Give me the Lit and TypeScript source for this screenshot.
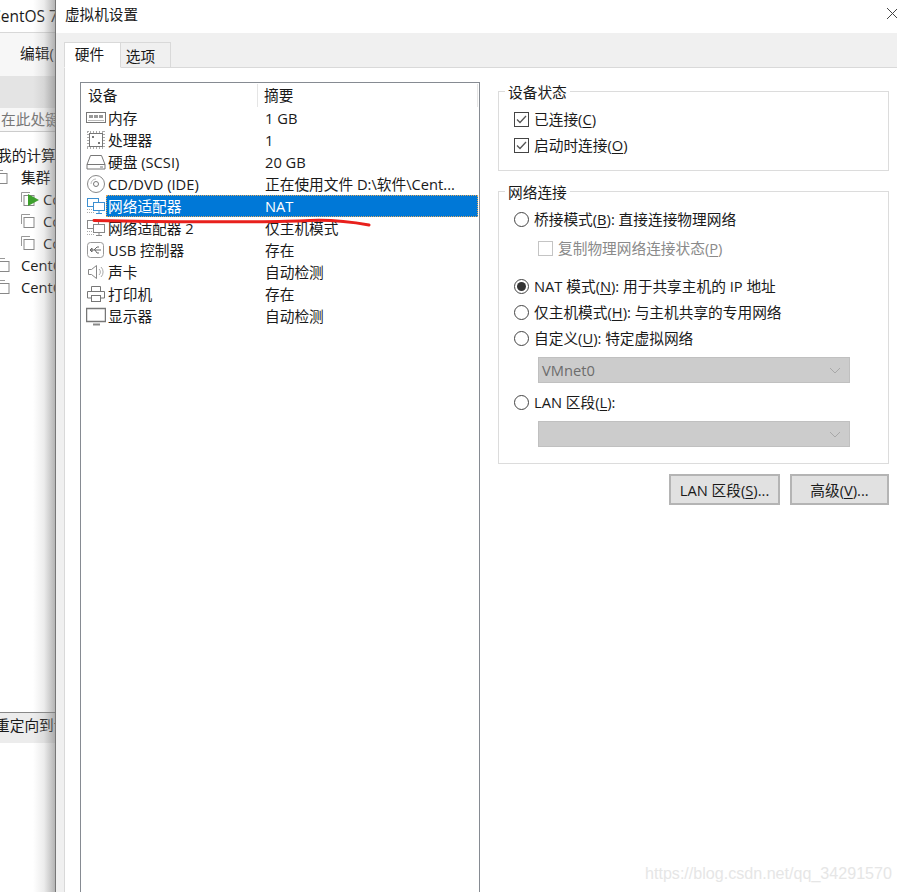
import { LitElement, html, css, svg } from "lit";
import { customElement } from "lit/decorators.js";

const G = "#7f7f7f";
const sv = (c: unknown, w = 20, h = 20) =>
  html`<svg class="ic" width=${w} height=${h} viewBox="0 0 ${w} ${h}" fill="none" stroke=${G}>${c}</svg>`;

const netIcon = (c: string) => sv(svg`
  <rect x="1.5" y="2.5" width="11" height="8" stroke=${c}/>
  <rect x="7.5" y="6.5" width="11" height="8" fill="#fff" stroke=${c}/>
  <path d="M13 14.5v3M10 17.5h6" stroke=${c}/>
  <path d="M1 13.5h6M1 16.5h7" stroke="#aaa" stroke-dasharray="1 1"/>
`);

const icons: Record<string, unknown> = {
  mem: sv(svg`<rect x="0.5" y="4.5" width="19" height="10" stroke="#777"/><rect x="3" y="7" width="4" height="3" fill="#999" stroke="none"/><rect x="8" y="7" width="4" height="3" fill="#999" stroke="none"/><rect x="13" y="7" width="4" height="3" fill="#999" stroke="none"/><path d="M2 12.5h16" stroke="#bbb"/>`),
  cpu: sv(svg`<rect x="3.5" y="3.5" width="13" height="13" stroke="#777"/><path d="M2 1v18M18 1v18M1 2h18M1 18h18" stroke="#aaa" stroke-width="2" stroke-dasharray="1 2" /><rect x="6" y="6" width="2" height="2" fill="#777" stroke="none"/><rect x="12" y="12" width="2" height="2" fill="#777" stroke="none"/>`),
  disk: sv(svg`<path d="M4.5 3.5h11l3.5 9v4.5h-18v-4.5z M1 12.5h18" stroke="#777"/><path d="M14 15h3" stroke="#777"/>`),
  cd: sv(svg`<circle cx="10" cy="10" r="8.5" stroke="#888"/><circle cx="10" cy="10" r="2.5" stroke="#777"/><path d="M5 10a5 5 0 0 1 5-5" stroke="#bbb"/>`),
  net: netIcon("#3c8fd0"),
  net2: netIcon("#888"),
  usb: sv(svg`<rect x="1.5" y="2.5" width="16" height="15" rx="3" stroke="#999"/><path d="M4 10h11M8 10l3-3h2M9 10l2 3h2M4 10l2-2v4z" stroke="#666"/>`),
  snd: sv(svg`<path d="M2.5 7.5h3l5-4v13l-5-4h-3z" stroke="#888"/><path d="M13 7a4 4 0 0 1 0 6M15 5a7 7 0 0 1 0 10" stroke="#aaa"/>`),
  prn: sv(svg`<path d="M5.5 7V2.5h9V7M5 14H1.5V7.5h17V14H15" stroke="#777"/><rect x="5.5" y="11.5" width="9" height="6" stroke="#777"/>`),
  mon: sv(svg`<rect x="0.5" y="2.5" width="19" height="13" stroke="#777" stroke-width="1.5"/><path d="M7 18.5h7" stroke="#888" stroke-width="2"/>`),
};

const rows: [string, string, string, boolean?][] = [
  ["mem", "内存", "1 GB"],
  ["cpu", "处理器", "1"],
  ["disk", "硬盘 (SCSI)", "20 GB"],
  ["cd", "CD/DVD (IDE)", "正在使用文件 D:\\软件\\Cent..."],
  ["net", "网络适配器", "NAT", true],
  ["net2", "网络适配器 2", "仅主机模式"],
  ["usb", "USB 控制器", "存在"],
  ["snd", "声卡", "自动检测"],
  ["prn", "打印机", "存在"],
  ["mon", "显示器", "自动检测"],
];

const vmIcon = sv(svg`<path d="M1.5 11V1.5H10" stroke="#999"/><rect x="4" y="4.5" width="10" height="10" stroke="#888"/>`, 16, 16);
const chev = html`<svg class="chev" width="12" height="7" viewBox="0 0 12 7" fill="none" stroke="#a8a8a8"><path d="M1 1l5 5 5-5"/></svg>`;
const tick = html`<svg width="13" height="13" viewBox="0 0 13 13" fill="none" stroke="#555" stroke-width="1.3"><path d="M2 6.5l3 3 6-6.5"/></svg>`;

@customElement("app-root")
export class AppRoot extends LitElement {
  static styles = css`
    :host { display: block; width: 897px; height: 892px; overflow: hidden; position: relative; background: #fff;
      font: 14.7px/22px "Open Sans", "Noto Sans CJK SC", sans-serif; color: #1a1a1a; }
    * { box-sizing: border-box; }
    u { text-underline-offset: 2px; }
    .page { display: flex; height: 892px; }
    .ic { flex: none; display: block; }

    .back { width: 55px; flex: none; position: relative; overflow: hidden; display: flex; flex-direction: column; background: #fff; }
    .back::after { content: ""; position: absolute; inset: 0; background: linear-gradient(to right, rgba(150,150,150,0) 60%, rgba(150,150,150,.18) 80%, rgba(120,120,120,.55) 100%); }
    .b-title { height: 33px; border-bottom: 1px solid #d8d8d8; white-space: nowrap; font-size: 15.5px; line-height: 33px; margin-left: -9px; width: 80px; }
    .b-tool { height: 43px; padding-left: 20px; line-height: 40px; white-space: nowrap; background: #f7f7f7; }
    .b-band { height: 32px; background: #e4e4e4; }
    .b-search { height: 24px; margin-left: -5px; width: 80px; padding-left: 6px; white-space: nowrap; color: #777; border-bottom: 1px solid #ccc; background: #f8f8f8; }
    .b-tree { height: 581px; padding-top: 12px; white-space: nowrap; border-bottom: 1px solid #888; }
    .t { height: 22px; display: flex; align-items: center; gap: 4px; }
    .t0 { margin-left: -3px; }
    .t1 { margin-left: -7px; gap: 12px; }
    .t2 { padding-left: 20px; gap: 7px; }
    .t3 { margin-left: -5px; gap: 10px; }
    .play { position: relative; }
    .play svg:last-child { position: absolute; left: 28px; top: 6px; }
    .b-foot { height: 30px; background: #ececec; margin-left: -5px; width: 80px; white-space: nowrap; padding-top: 1px; }

    .dlg { flex: 1; border-left: 1px solid #777; background: #f0f0f0; display: flex; flex-direction: column; min-width: 0; }
    .title { height: 33px; background: #fff; padding-left: 9px; line-height: 29px; font-size: 14.6px; position: relative; }
    .close { position: absolute; left: 831px; top: 8px; }
    .tabs { height: 34px; display: flex; align-items: flex-end; padding-left: 8px; }
    .tab { height: 25px; width: 50px; border: 1px solid #d9d9d9; border-bottom: 0; border-left: 0; text-align: center; line-height: 25px; margin-bottom: 0; }
    .tab.on { height: 26px; width: 57px; background: #fff; border-left: 1px solid #d9d9d9; border-bottom: 1px solid #fff; margin-bottom: -1px; position: relative; line-height: 23px; font-size: 14.7px; padding-right: 6px; }
    .tab:not(.on) { padding-right: 10px; padding-top: 1px; }
    .pane { flex: 1; margin-left: 8px; background: #fff; border: 1px solid #d9d9d9; border-right: 0; border-bottom: 0; padding: 14px 8px 0 15px; display: flex; gap: 18px; min-height: 0; }

    .list { width: 400px; flex: none; border: 1px solid #868b92; border-bottom: 0; height: 830px; }
    .head { height: 24px; display: flex; padding-top: 1px; }
    .head span { display: block; height: 23px; }
    .head .c1 { width: 177px; padding-left: 7px; border-right: 1px solid #e5e5e5; }
    .head .c2 { flex: 1; padding-left: 6px; border-right: 1px solid #e5e5e5; margin-right: 1px; }
    .row { height: 22px; display: flex; }
    .icn { width: 25px; flex: none; padding: 1px 0 0 5px; }
    .cell { flex: 1; display: flex; margin-right: 1px; padding-left: 2px; }
    .row.sel .cell { background: #0078d7; color: #fff; outline: 1px dotted #e0a860; outline-offset: -1px; }
    .name { width: 157px; flex: none; white-space: nowrap; }
    .val { white-space: nowrap; }

    .right { width: 391px; flex: none; display: flex; flex-direction: column; }
    .group { border: 1px solid #dcdcdc; padding: 0 0 0 15px; position: relative; }
    .g1 { height: 80px; margin-top: 9px; padding-top: 16px; }
    .g2 { height: 273px; margin-top: 20px; padding-top: 16px; }
    .legend { position: absolute; left: 6px; top: -11px; padding: 0 3px; background: #fff; line-height: 22px; }
    .opt { display: flex; align-items: center; gap: 5px; height: 22px; white-space: nowrap; }
    .g1 .opt + .opt { margin-top: 4px; }
    .g2 .opt.r + .opt.r { margin-top: 4px; }
    .box { width: 15px; height: 15px; border: 1px solid #444; display: flex; align-items: center; justify-content: center; background: #fff; flex: none; }
    .sub { margin: 7px 0 16px 24px; color: #8a8a8a; }
    .sub .box { border-color: #c4c4c4; margin-right: 0; }
    .radio { width: 15px; height: 15px; border-radius: 50%; border: 1px solid #444; flex: none; display: flex; align-items: center; justify-content: center; }
    .radio.on i { display: block; width: 9px; height: 9px; border-radius: 50%; background: #333; }
    .select { margin: 8px 0 8px 24px; width: 312px; height: 26px; background: #cccccc; border: 1px solid #c0c0c0; display: flex; align-items: center; justify-content: space-between; padding: 0 8px 0 3px; color: #6d6d6d; }
    .s2 { margin-bottom: 0; }
    .g2 .tight { margin-top: 8px; }
    .btns { display: flex; justify-content: flex-end; gap: 10px; margin-top: 10px; }
    .btn { height: 31px; background: #e1e1e1; border: 2px solid #b4b4b4; display: flex; align-items: center; justify-content: center; white-space: nowrap; }
    .b1 { width: 111px; }
    .b2 { width: 99px; }

    .red { position: absolute; left: 90px; top: 214px; pointer-events: none; }
    .mark { position: absolute; left: 645px; top: 864px; font: 16.1px/18px "Liberation Sans", sans-serif; color: #e6e6e6; white-space: nowrap; }
  `;

  render() {
    return html`
      <div class="page">
        <aside class="back">
          <div class="b-title">CentOS 7</div>
          <div class="b-tool">编辑(</div>
          <div class="b-band"></div>
          <div class="b-search">在此处键入</div>
          <div class="b-tree">
            <div class="t t0">我的计算机</div>
            <div class="t t1">${vmIcon}<span>集群</span></div>
            <div class="t t2 play">${vmIcon}<span>Co</span><svg width="12" height="12" viewBox="0 0 12 12"><path d="M0 0l11 6-11 6z" fill="#3da02c"/></svg></div>
            <div class="t t2">${vmIcon}<span>Co</span></div>
            <div class="t t2">${vmIcon}<span>Co</span></div>
            <div class="t t3">${vmIcon}<span>CentOS</span></div>
            <div class="t t3">${vmIcon}<span>CentOS</span></div>
          </div>
          <div class="b-foot">重定向到该</div>
        </aside>
        <section class="dlg">
          <div class="title">虚拟机设置
            <svg class="close" width="12" height="12" viewBox="0 0 12 12" stroke="#444" fill="none"><path d="M0 0l11 11M11 0L0 11"/></svg>
          </div>
          <div class="tabs">
            <div class="tab on">硬件</div>
            <div class="tab">选项</div>
          </div>
          <div class="pane">
            <div class="list">
              <div class="head"><span class="c1">设备</span><span class="c2">摘要</span></div>
              ${rows.map(([i, n, v, s]) => html`
                <div class="row ${s ? "sel" : ""}">
                  <div class="icn">${icons[i]}</div>
                  <div class="cell"><span class="name">${n}</span><span class="val">${v}</span></div>
                </div>`)}
            </div>
            <div class="right">
              <div class="group g1">
                <div class="legend">设备状态</div>
                <div class="opt"><span class="box">${tick}</span><span>已连接(<u>C</u>)</span></div>
                <div class="opt"><span class="box">${tick}</span><span>启动时连接(<u>O</u>)</span></div>
              </div>
              <div class="group g2">
                <div class="legend">网络连接</div>
                <div class="opt r"><span class="radio"></span><span>桥接模式(<u>B</u>): 直接连接物理网络</span></div>
                <div class="opt sub"><span class="box"></span><span>复制物理网络连接状态(<u>P</u>)</span></div>
                <div class="opt r"><span class="radio on"><i></i></span><span>NAT 模式(<u>N</u>): 用于共享主机的 IP 地址</span></div>
                <div class="opt r"><span class="radio"></span><span>仅主机模式(<u>H</u>): 与主机共享的专用网络</span></div>
                <div class="opt r"><span class="radio"></span><span>自定义(<u>U</u>): 特定虚拟网络</span></div>
                <div class="select"><span>VMnet0</span>${chev}</div>
                <div class="opt"><span class="radio"></span><span>LAN 区段(<u>L</u>):</span></div>
                <div class="select s2"><span></span>${chev}</div>
              </div>
              <div class="btns">
                <div class="btn b1"><span>LAN 区段(<u>S</u>)...</span></div>
                <div class="btn b2"><span>高级(<u>V</u>)...</span></div>
              </div>
            </div>
          </div>
        </section>
      </div>
      <svg class="red" width="285" height="16" viewBox="0 0 285 16" fill="none"><path d="M4 6.5C70 8 180 8.5 220 6.5C245 5.5 262 8 279 11" stroke="#e8201c" stroke-width="3" stroke-linecap="round"/></svg>
      <div class="mark">https://blog.csdn.net/qq_34291570</div>
    `;
  }
}
